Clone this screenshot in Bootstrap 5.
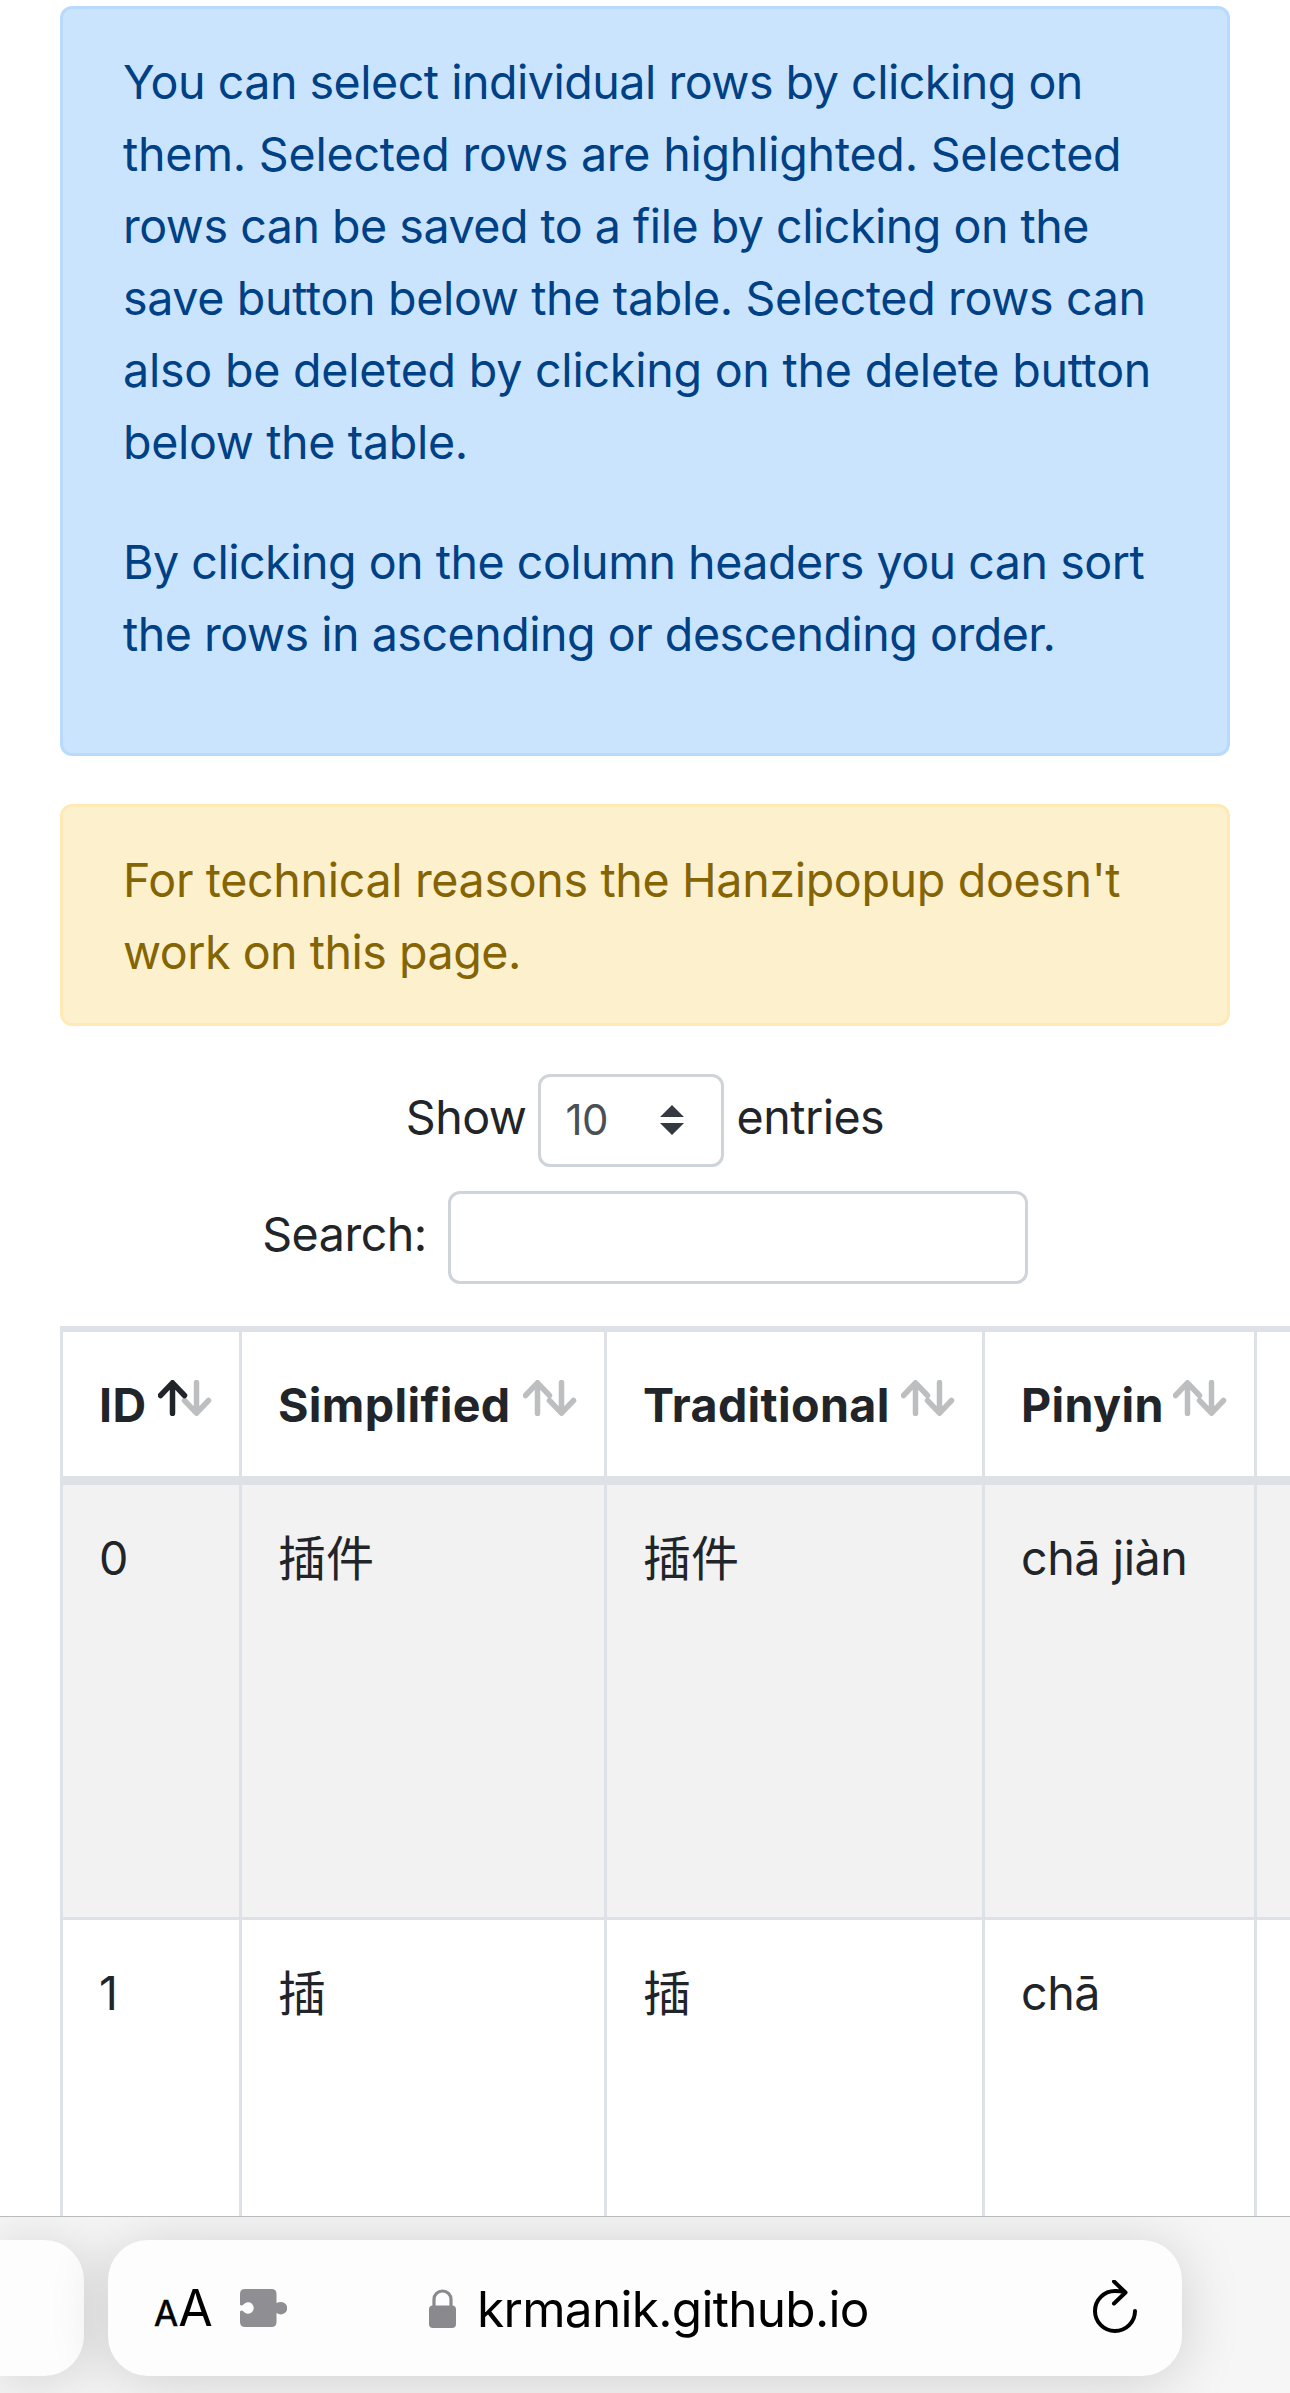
<!DOCTYPE html>
<html lang="en">
<head>
<meta charset="utf-8">
<meta name="viewport" content="width=device-width, initial-scale=1">
<title>Word table</title>
<link href="https://cdn.jsdelivr.net/npm/bootstrap@5.3.0/dist/css/bootstrap.min.css" rel="stylesheet">
<style>
  html, body { height: 2393px; overflow: hidden; }
  body { font-family: Inter, "Noto Sans CJK SC", sans-serif; font-size: 46.6px; line-height: 72px; color: #212529; background: #fff; }
  .page-body { height: 2216px; padding: 6px 60px 0; }
  .notice { border-width: 3px; border-radius: 12px; padding: 37px 60px 35px; margin-bottom: 48px; white-space: nowrap; }
  .notice p { margin-bottom: 48px; }
  .notice span { display: block; }
  .ls-1 { letter-spacing: -.24px; }
  .ls-2 { letter-spacing: -.35px; }
  .ls-3 { letter-spacing: -.5px; }
  .notice-info { color: #004085; background: #cae4fe; border-color: #b8daff; }
  .notice-warn { color: #856404; background: #fdf1cd; border-color: #ffeab5; }
  .field-box { height: 93px; border: 3px solid #ced4da; border-radius: 12px; background: #fff; }
  .length-box { width: 186px; padding: 0 37px 2px 24px; font-size: 42px; color: #495057; }
  .search-box { width: 580px; margin-left: 21px; padding: 0; outline: 0; }
  .ctl-row { height: 93px; gap: 12px; letter-spacing: -.5px; }
  .ctl-row > label { line-height: 86px; height: 93px; }
  .word-table { table-layout: fixed; width: 1500px; border-collapse: separate; border-spacing: 0; margin-top: 42px; }
  .word-table th, .word-table td { border: 0 solid #dee2e6; border-left-width: 3px; padding: 37px 27px 35px 36px; vertical-align: top; white-space: nowrap; }
  .word-table th { border-top-width: 6px; border-bottom-width: 9px; height: 159px; font-weight: 700; letter-spacing: .35px; }
  .word-table td { border-bottom-width: 3px; height: 435px; letter-spacing: -.4px; }
  .word-table .han { font-family: "Noto Sans CJK SC", sans-serif; font-size: 48px; letter-spacing: 0; padding-top: 34px; }
  .row-odd td { background: #f2f2f2; }
  .sort-arrows { width: 54px; height: 36px; margin-bottom: 14px; flex: none; }
  .browser-bar { height: 177px; border-top: 1px solid #b9babb; background: #f6f6f7; padding-top: 23px; overflow: hidden; color: #000; }
  .pill { height: 136px; background: #fdfdfd; border-radius: 40px; box-shadow: 0 5px 60px rgba(0,0,0,.16); flex: none; }
  .pill-prev { width: 84px; border-top-left-radius: 0; border-bottom-left-radius: 0; margin-right: 24px; }
  .pill-main { width: 1074px; padding-left: 46px; padding-right: 45px; }
  .aa-mark { width: 60px; margin-right: 26px; padding-top: 5px; }
  .aa-small { font-size: 35px; -webkit-text-stroke: .6px #000; }
  .aa-big { font-size: 50px; }
  .lock-icon { margin-left: 142px; }
  .host { font-size: 49.5px; letter-spacing: -.7px; width: 390px; margin-left: 21px; padding-top: 1px; white-space: nowrap; }
</style>
</head>
<body>
<main class="page-body overflow-hidden">
  <div class="alert notice notice-info">
    <p>
      <span class="ls-3">You can select individual rows by clicking on</span>
      <span class="ls-1">them. Selected rows are highlighted. Selected</span>
      <span class="ls-3">rows can be saved to a file by clicking on the</span>
      <span class="ls-2">save button below the table. Selected rows can</span>
      <span class="ls-1">also be deleted by clicking on the delete button</span>
      <span class="ls-2">below the table.</span>
    </p>
    <p>
      <span class="ls-3">By clicking on the column headers you can sort</span>
      <span class="ls-3">the rows in ascending or descending order.</span>
    </p>
  </div>
  <div class="alert notice notice-warn">
    <span class="ls-2">For technical reasons the Hanzipopup doesn't</span>
    <span class="ls-3">work on this page.</span>
  </div>

  <div class="ctl-row d-flex justify-content-center mb-4">
    <label>Show</label>
    <div class="field-box length-box d-flex align-items-center justify-content-between">
      <span>10</span>
      <svg width="24" height="30" viewBox="0 0 24 30" fill="#343a40"><path d="M12 0 24 12H0zM12 30 0 18h24z"/></svg>
    </div>
    <label>entries</label>
  </div>
  <div class="ctl-row d-flex justify-content-center gap-0">
    <label for="q">Search:</label>
    <input id="q" type="search" class="field-box search-box">
  </div>

  <svg class="d-none">
    <symbol id="arrow-up" viewBox="0 0 54 36"><path d="M14.500 33.500V3M2.500 15.500 14.500 2.800 26.500 15.500" fill="none" stroke="currentColor" stroke-width="5.500" stroke-linecap="round" stroke-linejoin="round"/></symbol>
    <symbol id="arrow-down" viewBox="0 0 54 36"><path d="M38.500 2.500V33M26.500 20.500 38.500 33.200 50.500 20.500" fill="none" stroke="currentColor" stroke-width="5.500" stroke-linecap="round" stroke-linejoin="round"/></symbol>
  </svg>
  <table class="word-table">
    <colgroup><col style="width:179px"><col style="width:365px"><col style="width:378px"><col style="width:272px"><col></colgroup>
    <thead>
      <tr>
        <th><div class="d-flex align-items-center justify-content-between">ID<svg class="sort-arrows"><use href="#arrow-down" color="#bdbebf"/><use href="#arrow-up" color="#212529"/></svg></div></th>
        <th><div class="d-flex align-items-center justify-content-between">Simplified<svg class="sort-arrows" color="#bdbebf"><use href="#arrow-up"/><use href="#arrow-down"/></svg></div></th>
        <th><div class="d-flex align-items-center justify-content-between">Traditional<svg class="sort-arrows" color="#bdbebf"><use href="#arrow-up"/><use href="#arrow-down"/></svg></div></th>
        <th><div class="d-flex align-items-center justify-content-between">Pinyin<svg class="sort-arrows" color="#bdbebf"><use href="#arrow-up"/><use href="#arrow-down"/></svg></div></th>
        <th></th>
      </tr>
    </thead>
    <tbody>
      <tr class="row-odd"><td>0</td><td class="han">插件</td><td class="han">插件</td><td>chā jiàn</td><td></td></tr>
      <tr><td>1</td><td class="han">插</td><td class="han">插</td><td>chā</td><td></td></tr>
    </tbody>
  </table>
</main>

<footer class="browser-bar d-flex">
  <div class="pill pill-prev"></div>
  <div class="pill pill-main d-flex align-items-center">
    <div class="aa-mark d-flex align-items-baseline"><span class="aa-small">A</span><span class="aa-big">A</span></div>
    <svg width="47" height="38" viewBox="0 0 47 38" fill="#8e8e93"><path d="M5 0H31.500Q36.500 0 36.500 5V14Q38.500 13 41 13A6.200 6.200 0 0 1 41 25.400Q38.500 25.400 36.500 24V33Q36.500 38 31.500 38H5Q0 38 0 33V22.500Q1.500 20.800 3.500 22.400A5.700 5.700 0 1 0 3.500 15.600Q1.500 17.400 0 15.800V5Q0 0 5 0Z"/></svg>
    <svg class="lock-icon" width="27" height="39" viewBox="0 0 27 39"><rect y="16.500" width="27" height="22.500" rx="4" fill="#8a8a8e"/><path d="M5 18V10.500a8.500 8.500 0 0 1 17 0V18" fill="none" stroke="#8a8a8e" stroke-width="3.200"/></svg>
    <span class="host">krmanik.github.io</span>
    <svg class="ms-auto" width="44" height="56" viewBox="0 0 44 56" fill="none" stroke="#000" stroke-width="4" stroke-linecap="round" stroke-linejoin="round"><path d="M42 31A20 20 0 1 1 22 11Q27 11 32 12M21 1.500 32.500 12.500 21 23.500"/></svg>
  </div>
</footer>
</body>
</html>
